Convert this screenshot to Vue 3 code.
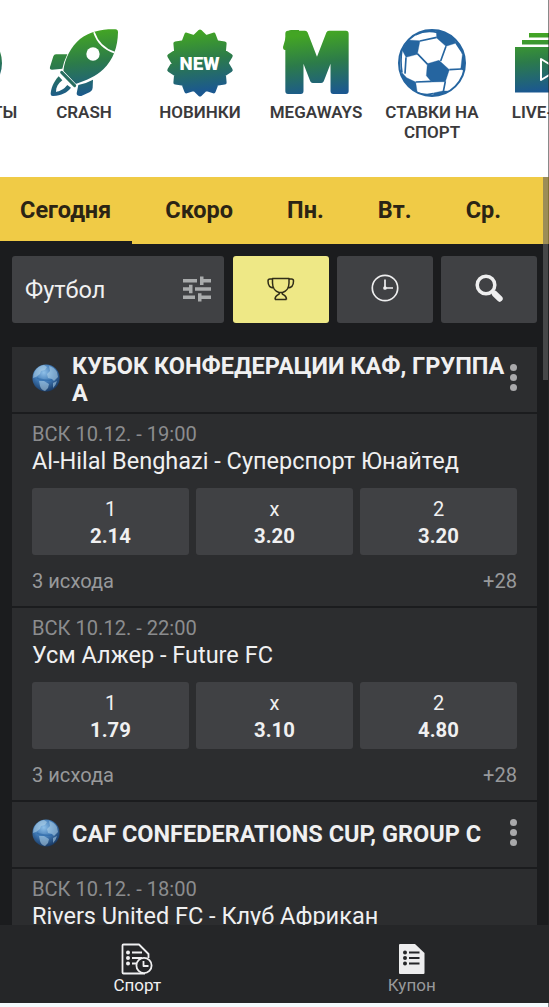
<script setup>
const categories = [
  { id: 'jackpot', lines: ['ДЖЕКПОТЫ'] },
  { id: 'crash', lines: ['CRASH'] },
  { id: 'new', lines: ['НОВИНКИ'] },
  { id: 'mega', lines: ['MEGAWAYS'] },
  { id: 'sport', lines: ['СТАВКИ НА', 'СПОРТ'] },
  { id: 'live', lines: ['LIVE-TV'] },
]
const days = ['Сегодня', 'Скоро', 'Пн.', 'Вт.', 'Ср.']
const leagues = [
  {
    name: 'КУБОК КОНФЕДЕРАЦИИ КАФ, ГРУППА А',
    matches: [
      { time: 'ВСК 10.12. - 19:00', teams: 'Al-Hilal Benghazi - Суперспорт Юнайтед', odds: ['2.14', '3.20', '3.20'] },
      { time: 'ВСК 10.12. - 22:00', teams: 'Усм Алжер - Future FC', odds: ['1.79', '3.10', '4.80'] },
    ],
  },
  {
    name: 'CAF CONFEDERATIONS CUP, GROUP C',
    matches: [{ time: 'ВСК 10.12. - 18:00', teams: 'Rivers United FC - Клуб Африкан', odds: [] }],
  },
]
const marks = ['1', 'x', '2']

// Fourteen-pointed badge outline centred on 34,34
const points = 14
const badge = Array.from({ length: points * 2 }, (_, i) => {
  const a = (i * Math.PI) / points
  const r = i % 2 ? 26.5 : 31.5
  return `${(34 + r * Math.sin(a)).toFixed(2)},${(34 - r * Math.cos(a)).toFixed(2)}`
}).join(' ')
</script>

<template>
  <div class="screen">
    <svg class="defs" width="0" height="0">
      <defs>
        <linearGradient id="brand" x1="0" y1="0" x2="0.12" y2="1">
          <stop offset="0.05" stop-color="#43a524" />
          <stop offset="0.5" stop-color="#2c7b4a" />
          <stop offset="1" stop-color="#1b5890" />
        </linearGradient>
        <linearGradient id="brandAbs" gradientUnits="userSpaceOnUse" x1="240" y1="85" x2="262" y2="288">
          <stop offset="0.05" stop-color="#43a524" />
          <stop offset="0.5" stop-color="#2c7b4a" />
          <stop offset="1" stop-color="#1b5890" />
        </linearGradient>
        <linearGradient id="brandMega" gradientUnits="userSpaceOnUse" x1="30" y1="2" x2="38" y2="66">
          <stop offset="0.05" stop-color="#43a524" />
          <stop offset="0.5" stop-color="#2c7b4a" />
          <stop offset="1" stop-color="#1b5890" />
        </linearGradient>
        <radialGradient id="ocean" cx="0.42" cy="0.3" r="0.72">
          <stop offset="0" stop-color="#8fc0e8" />
          <stop offset="0.5" stop-color="#3f78b4" />
          <stop offset="1" stop-color="#173761" />
        </radialGradient>
      </defs>
    </svg>

    <nav class="categories">
      <a v-for="c in categories" :key="c.id" class="category" :class="c.id">
        <svg v-if="c.id === 'jackpot'" class="pic" viewBox="0 0 68 68">
          <circle cx="34" cy="34" r="34" fill="url(#brand)" />
        </svg>
        <svg v-else-if="c.id === 'crash'" class="pic" viewBox="150 86 204 204">
          <g fill="url(#brandAbs)">
            <path d="M202 162h-34q-6 0-8 6l-10 32q-2 8 6 8l31-3q4-20 15-43z" />
            <path d="M279 238l-1 24q0 9-8 13l-26 12q-14 2-14-8l5-25q22-4 44-16z" />
            <path d="M346 87Q354 87 354 96C353 140 341 177 310 207C288 228 261 240 227 251L190 213C194 174 214 138 240 116C270 93 306 86 346 87Z" />
            <path d="M176 228C159 247 153 266 152 281Q152 288 160 287C184 285 202 277 213 262L202 254C191 268 180 272 168 275C168 261 174 249 187 240Z" />
          </g>
          <path d="M282 96C291 123 313 147 344 157" fill="none" stroke="#fff" stroke-width="5" />
          <circle cx="279" cy="161" r="20" fill="#fff" />
          <path d="M184 215L225 258" stroke="#fff" stroke-width="14" stroke-linecap="round" />
          <path d="M185 216L224 256" stroke="#286e60" stroke-width="9" stroke-linecap="round" />
        </svg>
        <svg v-else-if="c.id === 'new'" class="pic" viewBox="0 0 68 68">
          <polygon :points="badge" fill="url(#brand)" stroke="url(#brand)" stroke-width="4" stroke-linejoin="round" />
          <text class="new-text" x="33.5" y="40.5" text-anchor="middle" textLength="40" lengthAdjust="spacingAndGlyphs">NEW</text>
        </svg>
        <svg v-else-if="c.id === 'mega'" class="pic" viewBox="0 0 68 68">
          <path d="M5 4q0-2 4-3h8v20H3q-2 0-2-3z" fill="#40a026" />
          <text class="mega-text" x="-0.5" y="61.5" textLength="71" lengthAdjust="spacingAndGlyphs">M</text>
        </svg>
        <svg v-else-if="c.id === 'sport'" class="pic" viewBox="372 86 204 204">
          <clipPath id="ball"><circle cx="474" cy="188" r="99" /></clipPath>
          <g clip-path="url(#ball)" fill="#2565a0" stroke="#2565a0" stroke-linejoin="round">
            <path d="M460 190L495 180L526 208L514 244L473 245L457 226ZM402 119L438 121L430 162L396 171L384 148ZM487 90L530 96L547 128L516 138L488 113ZM384 217L398 232L425 245L430 278L405 272L378 240ZM566 155L580 170L580 215L560 207ZM478 278L506 272L536 272L520 295L478 295Z" />
            <path fill="none" stroke-width="5" d="M438 122L488 111M516 138L500 182M430 160L461 192M473 243L425 245M396 171L393 220M384 148Q378 180 384 217M526 208L562 206M514 243L508 274M546 128L566 158M545 120Q560 140 566 160M425 103Q455 88 490 96M430 277Q455 286 478 280" />
          </g>
          <circle cx="474" cy="188" r="99" fill="none" stroke="#2565a0" stroke-width="6" />
        </svg>
        <svg v-else class="pic" viewBox="0 0 68 68">
          <path d="M15 4h38v4.500H15zM8 11h52v4.500H8zM1 18h66v45.500H1z" fill="url(#brand)" />
          <path d="M27 30v21l17-10.500z" fill="none" stroke="#fff" stroke-width="2" stroke-linejoin="round" />
        </svg>
        <span class="label"><span v-for="l in c.lines" :key="l">{{ l }}</span></span>
      </a>
    </nav>

    <nav class="days">
      <a v-for="(d, i) in days" :key="d" class="day" :class="{ active: i === 0 }">{{ d }}</a>
    </nav>

    <div class="filters">
      <div class="box select">
        <span>Футбол</span>
        <svg width="28" height="26" viewBox="0 0 28 26" fill="#a9abac">
          <path d="M0 3h14v3.500H0zM17 .5h3.500V3H28v3.500h-7.500V9H17zM0 11.300h6V8.800h3.500v8.400H6v-2.400H0zM12 11.300h16v3.500H12zM0 19.600h12v3.500H0zM15 17.300h3.500v2.300H28v3.500h-9.500v2.500H15z" />
        </svg>
      </div>
      <div class="box trophy">
        <svg width="28" height="26" viewBox="0 0 28 26" fill="none" stroke="#302d18" stroke-width="1.5" stroke-linejoin="round">
          <path d="M5.500 3.500H22V8c0 5-3 8.500-6.500 9.500h-3.500C8.500 16.500 5.500 13 5.500 8zM5.500 4H3Q1 4 1 6c0 4 2 7 6 7M22 4h2.500q2 0 2 2c0 4-2 7-6 7M8 24.500c0-3.500 1.500-4 3.500-5 1-.5 1-1 1-2M19.500 24.500c0-3.500-1.500-4-3.500-5-1-.5-1-1-1-2M8 24.500h11.500" />
        </svg>
      </div>
      <div class="box">
        <svg width="28" height="28" viewBox="0 0 28 28" fill="none" stroke="#eeeeef" stroke-width="1.7">
          <circle cx="14" cy="14" r="12.700" /><path d="M14 5.500V14h8" /><circle cx="14" cy="14" r="1" fill="#eee" />
        </svg>
      </div>
      <div class="box">
        <svg width="28" height="28" viewBox="0 0 28 28" fill="none" stroke="#eeeeef">
          <circle cx="11" cy="11" r="8.800" stroke-width="3.500" /><path d="M17.500 17.500L20 20" stroke-width="3.500" /><path d="M19.800 19.800L24.700 24.700" stroke-width="6" stroke-linecap="round" />
        </svg>
      </div>
    </div>

    <main class="leagues">
      <template v-for="league in leagues" :key="league.name">
        <header class="league">
          <svg class="globe" viewBox="0 0 28 28">
            <circle cx="14" cy="14" r="13.600" fill="url(#ocean)" />
            <path d="M3 7Q6 2 12 1L15 3 13 6 9 7 8 10 4 13 1 14Q1 10 3 7zM17 2Q22 3 25 8L26 13 22 17 20 15 16 14 15 10 18 7zM7 17L12 17 17 20 16 24 13 27Q9 26 8 22zM21 19L25 17Q24 21 21 24z" fill="#b5d5ea" fill-opacity=".55" />
            <path d="M5 14Q10 17 20 16" stroke="#2c68a7" stroke-width="1.500" fill="none" opacity=".6" />
          </svg>
          <h2>{{ league.name }}</h2>
          <span class="dots"><i /><i /><i /></span>
        </header>
        <section v-for="m in league.matches" :key="m.teams" class="match">
          <div class="time">{{ m.time }}</div>
          <div class="teams">{{ m.teams }}</div>
          <template v-if="m.odds.length">
            <div class="odds">
              <div v-for="(o, i) in m.odds" :key="i" class="odd"><span>{{ marks[i] }}</span><b>{{ o }}</b></div>
            </div>
            <div class="foot"><span>3 исхода</span><span>+28</span></div>
          </template>
        </section>
      </template>
    </main>

    <footer class="bottom">
      <a class="tab current">
        <svg width="32" height="32" viewBox="0 0 32 32" fill="none" stroke="#f0f0f1" stroke-width="1.800" stroke-linejoin="round">
          <path d="M17 30.500H2.500q-1 0-1-1V2.500q0-1 1-1H18L27.500 11v4M17 30.500h7" />
          <path d="M11 9.500h10M11 15h10M11 20.500h5" />
          <g fill="#f0f0f1" stroke="none"><circle cx="7" cy="9.500" r="2" /><circle cx="7" cy="15" r="2" /><circle cx="7" cy="20.500" r="2" /></g>
          <circle cx="23" cy="22.500" r="7.600" fill="#252628" /><path d="M22.500 18v5h5" />
        </svg>
        <span>Спорт</span>
      </a>
      <a class="tab">
        <svg width="32" height="32" viewBox="0 0 32 32">
          <path d="M4 1h15l9.500 9v20q0 1-1 1H4q-1 0-1-1V2q0-1 1-1z" fill="#ededee" />
          <path d="M13 9.500h10.500M13 15h10.500M13 20.500h10.500" stroke="#252628" stroke-width="2" />
          <g fill="#252628"><circle cx="9" cy="9.500" r="2" /><circle cx="9" cy="15" r="2" /><circle cx="9" cy="20.500" r="2" /></g>
        </svg>
        <span>Купон</span>
      </a>
    </footer>
    <div class="scrollbar"></div>
    <div class="edge"></div>
  </div>
</template>

<style>
body { margin: 0; background: #1b1c1e; overflow: hidden; }
</style>

<style scoped>
* { box-sizing: border-box; }
.screen { position: relative; width: 549px; height: 1007px; overflow: hidden; background: #1b1c1e; font-family: Roboto, "Liberation Sans", sans-serif; color: #f0f0f1; display: flex; flex-direction: column; }
.defs { position: absolute; }
.categories { height: 177px; flex: none; background: #fff; display: flex; margin-left: -90px; padding-top: 28px; width: 700px; }
.category { width: 116px; flex: none; display: flex; flex-direction: column; align-items: center; }
.pic { width: 68px; height: 68px; flex: none; display: block; margin-top: 1px; overflow: visible; }
.label { display: flex; flex-direction: column; align-items: center; margin-top: 5px; font-size: 17px; line-height: 20px; font-weight: 600; color: #3b3a3c; white-space: nowrap; }
.live .label { margin-left: -10px; }
.new-text { font: 900 18.500px Roboto, sans-serif; fill: #fff; }
.mega-text { font: 700 79px "DejaVu Sans", sans-serif; fill: url(#brandMega); stroke: url(#brandMega); stroke-width: 6px; stroke-linejoin: round; }
.days { height: 67px; flex: none; background: #f0cb46; display: flex; gap: 13px; }
.day { padding: 0 21px 0 20px; height: 67px; line-height: 67px; font-size: 23.500px; font-weight: 700; color: #2b2414; white-space: nowrap; }
.day.active { border-bottom: 3px solid #1b1c1e; }
.filters { display: flex; gap: 8px; padding: 12px 12px 0; height: 103px; flex: none; }
.box { width: 96px; height: 67px; flex: none; border-radius: 3px; background: #404144; display: flex; align-items: center; justify-content: center; padding-bottom: 3px; }
.select { width: 212px; justify-content: space-between; padding: 0 13px; font-size: 23.500px; margin-right: 1px; }
.select svg { margin-top: -2px; }
.trophy { background: #eee886; }
.leagues { width: 525px; height: 578px; flex: none; margin-left: 12px; overflow: hidden; display: flex; flex-direction: column; gap: 2px; }
.league { height: 65px; flex: none; background: #2c2d2f; display: flex; align-items: center; padding: 0 19px 0 20px; }
.globe { width: 28px; height: 28px; flex: none; margin-right: 12px; margin-top: -4px; }
h2 { margin: 0; width: 435px; flex: none; font-size: 23.500px; line-height: 27px; font-weight: 700; }
.dots { display: flex; flex-direction: column; gap: 3px; margin: -5px 0 0 3px; }
.dots i { width: 7px; height: 7px; border-radius: 50%; background: #a9a9ab; }
.match { height: 192px; flex: none; background: #2c2d2f; padding: 7px 20px 0; }
.time { font-size: 20.100px; line-height: 26px; color: #8b8c8e; white-space: nowrap; }
.teams { font-size: 23.500px; line-height: 28px; white-space: nowrap; }
.odds { display: flex; gap: 7px; margin-top: 13px; }
.odd { width: 157px; height: 67px; border-radius: 3px; background: #404144; display: flex; flex-direction: column; align-items: center; font-size: 20px; line-height: 27px; padding-top: 8px; }
.odd b { font-size: 20.300px; }
.foot { display: flex; justify-content: space-between; color: #98999b; font-size: 20.100px; line-height: 26px; margin-top: 13px; }
.bottom { height: 82px; flex: none; background: #252628; display: flex; border-bottom: 4px solid #f4fbfe; }
.tab { width: 50%; display: flex; flex-direction: column; align-items: center; padding-top: 18px; font-size: 17px; line-height: 20px; color: #98999b; }
.tab.current { color: #f0f0f1; }
.scrollbar { position: absolute; left: 543px; top: 177px; width: 5px; height: 203px; background: rgba(100, 100, 100, 0.6); }
.edge { position: absolute; right: 0; top: 0; width: 1px; height: 1007px; background: rgba(40, 40, 40, 0.55); }
</style>
